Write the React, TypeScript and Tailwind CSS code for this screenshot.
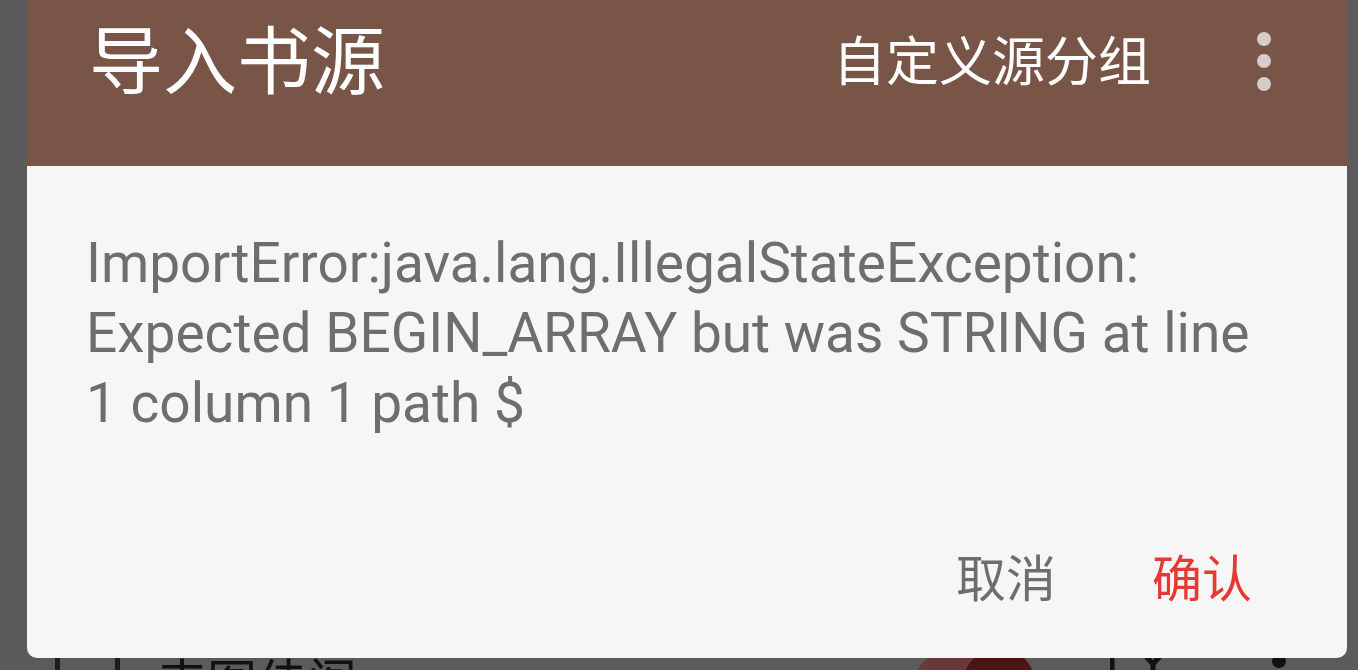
import React from "react";

const lines = [
  "ImportError:java.lang.IllegalStateException:",
  "Expected BEGIN_ARRAY but was STRING at line",
  "1 column 1 path $",
];

// the list row that shows under the dimmed overlay
const BackRow = () => {
  return (
    <div className="shrink-0 flex items-start h-[80px]">
      <div className="ml-[55px] mt-[-8px] w-[65px] h-[65px] rounded-[6px] border-[5px] border-[#1c1c1c]"></div>
      <p className="ml-[37px] mt-[4px] text-[50px] leading-none text-[#111111] font-['Noto_Sans_CJK_SC',sans-serif]">来图佳阁</p>
      <div className="flex-1"></div>
      <div className="relative mt-[4px] w-[120px] h-[56px] rounded-full bg-[#6a3838]">
        <div className="absolute right-0 top-[-6px] w-[72px] h-[72px] rounded-full bg-[#4c1414]"></div>
      </div>
      <svg className="ml-[75px] mt-[-4px]" width="54" height="54" viewBox="0 0 54 54" fill="none" stroke="#111111" strokeWidth="5">
        <path d="M2 0 V54" />
        <path d="M34 8 L43 18 L52 8" />
        <path d="M43 18 V54" />
      </svg>
      <div className="ml-[108px] mr-[72px] mt-[4px] flex flex-col gap-[8px]">
        <div className="w-[14px] h-[14px] rounded-full bg-[#111111]"></div>
        <div className="w-[14px] h-[14px] rounded-full bg-[#111111]"></div>
      </div>
    </div>
  );
};

export default function App() {
  return (
    <div className="relative w-[1358px] h-[670px] overflow-hidden bg-[#5b5b5b] font-[family-name:Roboto,'Noto_Sans_CJK_SC',sans-serif]">
      <div className="flex flex-col h-full">
        <div className="shrink-0 h-[650px]"></div>
        <BackRow />
      </div>

      {/* import dialog */}
      <div className="absolute left-[27px] top-0 w-[1320px] h-[658px] flex flex-col rounded-b-[10px] overflow-hidden bg-[#f6f6f6]">
        <div className="h-[166px] pb-[44px] pl-[62px] pr-[76px] flex items-center bg-[#795548] text-white">
          <p className="mt-[-10px] text-[74px] leading-none font-['Noto_Sans_CJK_SC',sans-serif]">导入书源</p>
          <div className="flex-1"></div>
          <p className="mt-[-6px] text-[53px] leading-none font-['Noto_Sans_CJK_SC',sans-serif]">自定义源分组</p>
          <div className="ml-[106px] flex flex-col gap-[8.5px]">
            <div className="w-[14px] h-[14px] rounded-full bg-[#d7ccc8]"></div>
            <div className="w-[14px] h-[14px] rounded-full bg-[#d7ccc8]"></div>
            <div className="w-[14px] h-[14px] rounded-full bg-[#d7ccc8]"></div>
          </div>
        </div>

        <div className="flex-1 flex flex-col pt-[62px] pl-[59px] pr-[60px] pb-[58px]">
          <div className="text-[55px] leading-[70px] text-[#6e6e6e]">
            {lines.map((line, key) => {
              return (
                <p key={key} className="whitespace-nowrap">
                  {line}
                </p>
              );
            })}
          </div>
          <div className="flex-1"></div>
          <div className="flex justify-end gap-[96px] pr-[35px] text-[50px] leading-none font-['Noto_Sans_CJK_SC',sans-serif]">
            <span className="text-[#6e6e6e]">取消</span>
            <span className="text-[#e53935]">确认</span>
          </div>
        </div>
      </div>
    </div>
  );
}
